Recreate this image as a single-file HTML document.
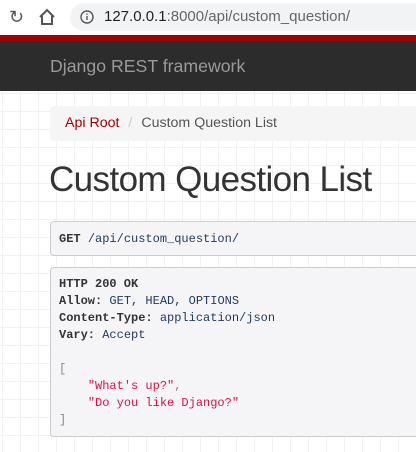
<!DOCTYPE html>
<html><head><style>
body{margin:0;width:416px;height:452px;overflow:hidden;font-family:"Liberation Sans",sans-serif;position:relative;background:#fff}
.top{position:absolute;left:0;top:0;width:416px;height:35px;background:#fff}
.url{position:absolute;left:70px;top:3px;width:360px;height:28px;border-radius:14px;background:#f1f3f4;}
.url span{position:absolute;left:34px;top:5px;font-size:15px;color:#222}
.red{position:absolute;top:35px;left:0;width:416px;height:6px;background:#a30000}
.nav{position:absolute;top:41px;left:0;width:416px;height:50px;background:#2c2c2c}
.nav span{position:absolute;left:50px;top:15px;font-size:17.7px;color:#9a9a9a}
.grid{position:absolute;top:91px;left:0;width:416px;height:361px;background-color:#fff;background-image:linear-gradient(#f1f1f1 1px,transparent 1px),linear-gradient(90deg,#f1f1f1 1px,transparent 1px);background-size:18px 18px;background-position:2px 2px}
.bc{position:absolute;left:50px;top:106px;width:380px;height:35px;background:#f5f5f5;border-radius:4px;font-size:14.2px;line-height:35px}
.bc a{color:#a30000;margin-left:15px}
.bc i{font-style:normal;color:#ccc;margin:0 9px}
.bc b{font-weight:normal;color:#555}
h1{position:absolute;left:49px;top:160px;margin:0;font-size:35px;font-weight:300;color:#333;font-family:"Liberation Sans",sans-serif;letter-spacing:-0.6px}
pre{position:absolute;margin:0;left:50px;width:380px;background:#f5f5f7;border:1px solid #ccc;border-radius:4px;font-family:"Liberation Mono",monospace;font-size:12px;line-height:17px;padding:0 8px;box-sizing:border-box;color:#333}
.k{color:#1e3a5f}
.s{color:#dd1144}
.g{color:#888}
</style></head><body>
<div class="top">
<div style="position:absolute;left:9px;top:7px;font-size:18px;color:#555">&#x21bb;</div>
<svg style="position:absolute;left:38px;top:8px" width="18" height="18" viewBox="0 0 18 18"><path d="M2 9 L9 2 L16 9 M4 8 V16 H14 V8" fill="none" stroke="#555" stroke-width="2"/></svg>
<div class="url"><svg style="position:absolute;left:10px;top:7px" width="14" height="14" viewBox="0 0 14 14"><circle cx="7" cy="7" r="6" fill="none" stroke="#555" stroke-width="1.4"/><path d="M7 6v4M7 3.5v1.2" stroke="#555" stroke-width="1.4"/></svg><span>127.0.0.1<span style="position:static;color:#666">:8000/api/custom_question/</span></span></div>
</div>
<div class="red"></div>
<div class="nav"><span>Django REST framework</span></div>
<div class="grid"></div>
<div class="bc"><a>Api Root</a><i>/</i><b>Custom Question List</b></div>
<h1>Custom Question List</h1>
<pre style="top:221px;height:35px;line-height:34px"><b>GET</b> <span class="k">/api/custom_question/</span></pre>
<pre style="top:267px;height:170px;padding-top:8px"><b>HTTP 200 OK</b>
<b>Allow:</b> <span class="k">GET, HEAD, OPTIONS</span>
<b>Content-Type:</b> <span class="k">application/json</span>
<b>Vary:</b> <span class="k">Accept</span>

<span class="g">[</span>
    <span class="s">"What's up?"</span><span class="g">,</span>
    <span class="s">"Do you like Django?"</span>
<span class="g">]</span></pre>
</body></html>
